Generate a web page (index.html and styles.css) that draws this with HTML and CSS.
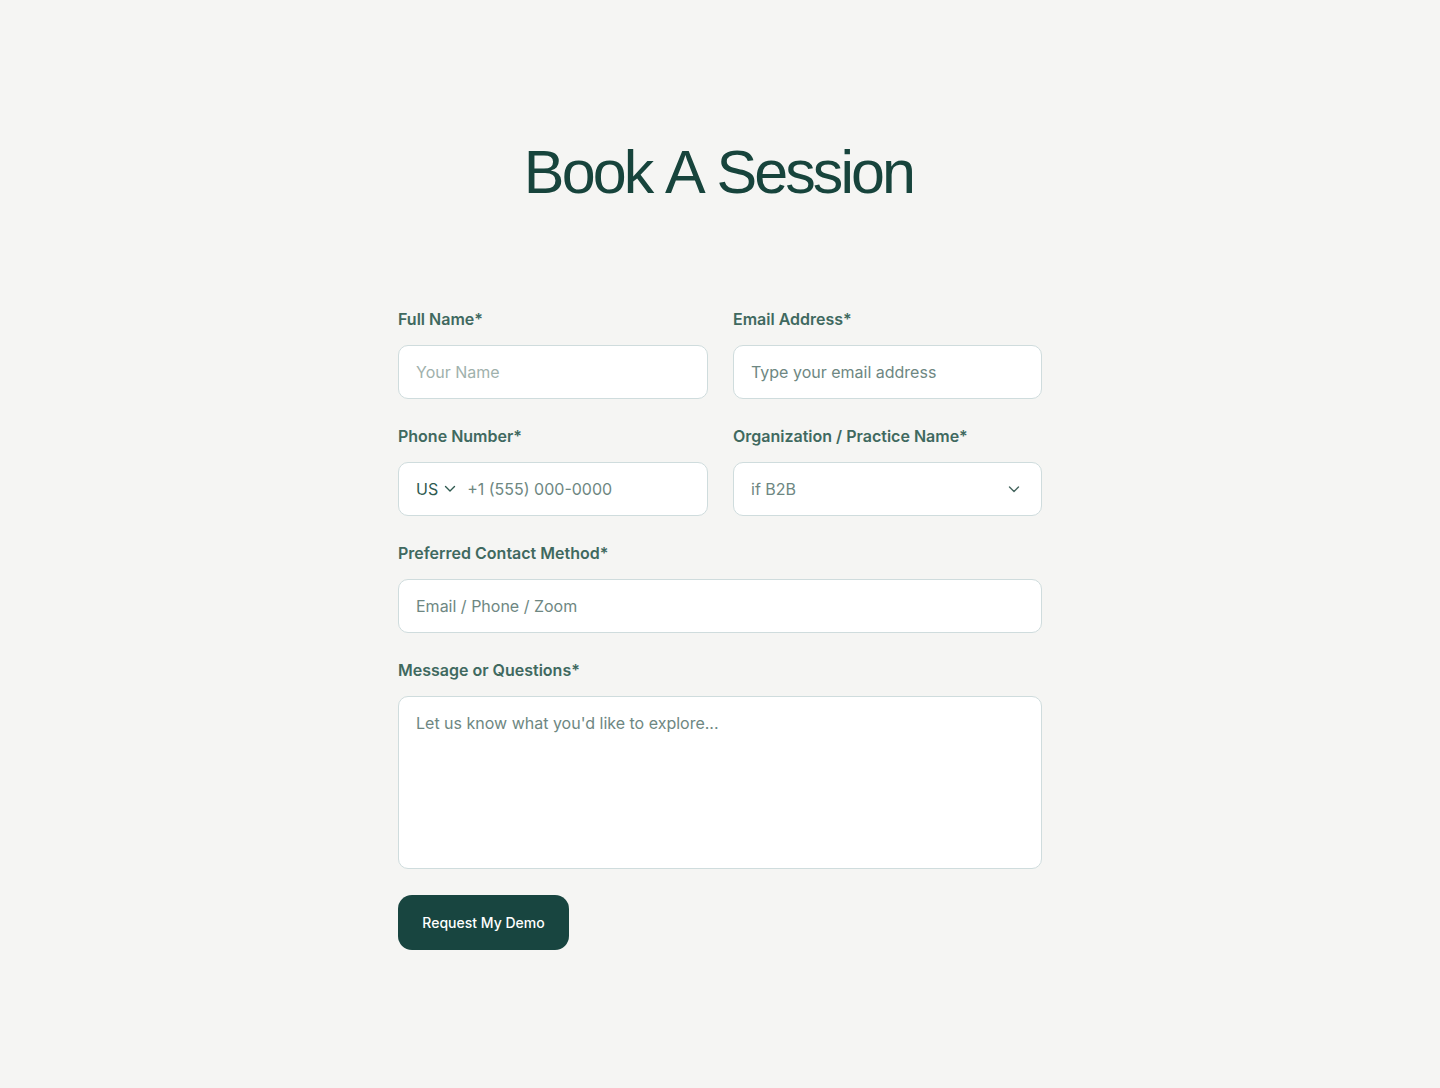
FILE: index.html
```html
<!DOCTYPE html>
<html lang="en">
<head>
  <meta charset="UTF-8" />
  <meta name="viewport" content="width=device-width, initial-scale=1.0"/>
  <title>Book A Session</title>
  <link rel="stylesheet" href="styles.css">
</head>
<body>

<main class="page">
  <h1 class="title">Book A Session</h1>

  <form class="booking-form">
    <div class="row two">
      <div class="field">
        <label for="name">Full Name*</label>
        <input id="name" type="text" class="light" placeholder="Your Name">
      </div>
      <div class="field">
        <label for="email">Email Address*</label>
        <input id="email" type="email" placeholder="Type your email address">
      </div>
    </div>

    <div class="row two">
      <div class="field">
        <label for="phone">Phone Number*</label>
        <div class="box phone">
          <span class="country">US
            <svg width="14" height="14" viewBox="0 0 14 14" fill="none"><path d="M2.5 4.5l4.5 4.5 4.5-4.5" stroke="#2f5a50" stroke-width="1.4" stroke-linecap="round" stroke-linejoin="round"/></svg>
          </span>
          <input id="phone" type="tel" placeholder="+1 (555) 000-0000">
        </div>
      </div>
      <div class="field">
        <label for="org">Organization / Practice Name*</label>
        <div class="box select">
          <span>if B2B</span>
          <svg width="16" height="16" viewBox="0 0 16 16" fill="none"><path d="M3.5 6l4.5 4.5L12.5 6" stroke="#46665f" stroke-width="1.4" stroke-linecap="round" stroke-linejoin="round"/></svg>
        </div>
      </div>
    </div>

    <div class="row">
      <div class="field">
        <label for="method">Preferred Contact Method*</label>
        <input id="method" type="text" placeholder="Email / Phone / Zoom">
      </div>
    </div>

    <div class="row">
      <div class="field">
        <label for="msg">Message or Questions*</label>
        <textarea id="msg" placeholder="Let us know what you'd like to explore..."></textarea>
      </div>
    </div>

    <button type="button" class="submit">Request My Demo</button>
  </form>
</main>

</body>
</html>
```

FILE: styles.css
```css
* {
  box-sizing: border-box;
}

html, body {
  margin: 0;
  padding: 0;
  background: #f5f5f3;
  font-family: Inter, 'Noto Sans', sans-serif;
}

.page {
  width: 644px;
  margin: 0 auto;
  padding-top: 137px;
}

.title {
  margin: 0 0 102px -3px;
  text-align: center;
  font-family: 'Liberation Sans', Arial, sans-serif;
  font-size: 61px;
  font-weight: 400;
  letter-spacing: -2.9px;
  word-spacing: 3px;
  line-height: 70px;
  color: #17443c;
}

.booking-form {
  display: flex;
  flex-direction: column;
  gap: 27px;
}

.row {
  display: grid;
  grid-template-columns: 1fr;
}

.row.two {
  grid-template-columns: 310px 309px;
  column-gap: 25px;
}

.field {
  display: flex;
  flex-direction: column;
  gap: 16px;
}

label {
  font-size: 16px;
  font-weight: 600;
  line-height: 20px;
  color: #40695f;
}

input, textarea, .box {
  width: 100%;
  height: 54px;
  border: 1px solid #cfdcdd;
  border-radius: 10px;
  background: #ffffff;
  font-family: Inter, 'Noto Sans', sans-serif;
  font-size: 16px;
  color: #2f5a50;
  padding: 0 17px;
  outline: none;
}

::placeholder {
  color: #6e8782;
  opacity: 1;
}

input.light::placeholder {
  color: #9fb1ac;
}

textarea {
  height: 173px;
  padding: 16px 17px;
  resize: none;
  line-height: 20px;
}

.box {
  display: flex;
  align-items: center;
}

.phone input {
  border: none;
  height: 100%;
  padding: 0;
  border-radius: 0;
  background: transparent;
  flex: 1;
}

.country {
  display: flex;
  align-items: center;
  gap: 5px;
  margin-right: 10px;
  color: #2f5a50;
}

.select {
  justify-content: space-between;
  color: #6e8782;
  padding-right: 19px;
}

.submit {
  align-self: flex-start;
  margin-top: -1px;
  width: 171px;
  height: 55px;
  border: none;
  border-radius: 14px;
  background: #184540;
  color: #ffffff;
  font-family: Inter, 'Noto Sans', sans-serif;
  font-size: 14px;
  font-weight: 500;
  cursor: pointer;
}
```
